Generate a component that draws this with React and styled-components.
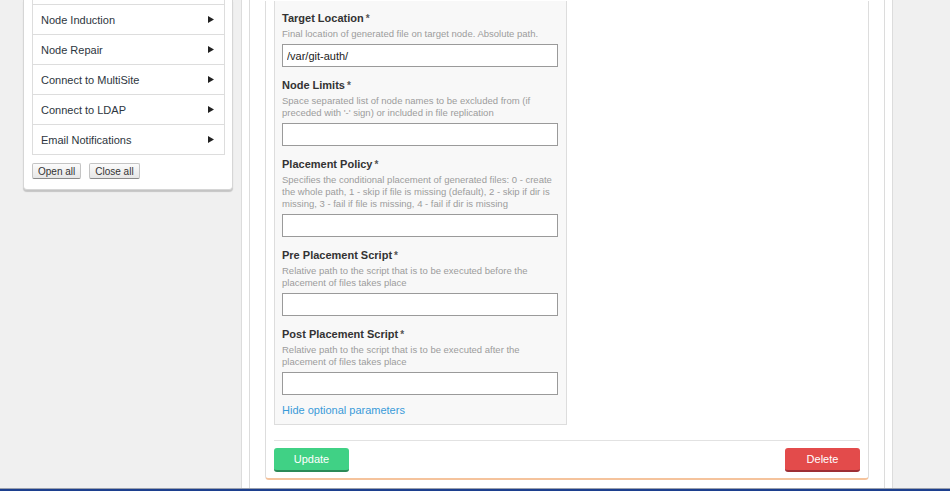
import React from "react";
import styled, { createGlobalStyle } from "styled-components";

const GlobalStyle = createGlobalStyle`
  html, body {
    margin: 0;
    padding: 0;
    height: 100%;
    overflow: hidden;
  }
  body {
    background: #f0f0f0;
    font-family: Arial, "Liberation Sans", sans-serif;
    color: #333;
  }
`;

const Page = styled.div`
  min-height: 100vh;
  display: flex;
  flex-direction: column;
`;

const Body = styled.div`
  flex: 1;
  display: flex;
  align-items: stretch;
`;

const Sidebar = styled.div`
  align-self: flex-start;
  width: 210px;
  margin-left: 23px;
  box-sizing: border-box;
  background: #ffffff;
  border: 1px solid #d6d6d6;
  border-top: none;
  border-radius: 0 0 4px 4px;
  box-shadow: 0 2px 1px rgba(0, 0, 0, 0.18);
  padding: 0 7px 10px 8px;
`;

const MenuList = styled.ul`
  list-style: none;
  margin: -25px 0 0;
  padding: 0;
  border: 1px solid #dddddd;
  border-top: none;
`;

const MenuItem = styled.li`
  height: 29px;
  border-bottom: 1px solid #dddddd;
  display: flex;
  align-items: center;
  justify-content: space-between;
  padding: 0 10px 0 8px;
  font-size: 11px;
  color: #2d3640;
  cursor: pointer;

  &:last-child {
    border-bottom: none;
  }
`;

const Arrow = styled.svg`
  width: 6px;
  height: 7px;
  fill: #222;
`;

const SideButtons = styled.div`
  display: flex;
  gap: 8px;
  margin-top: 8px;
`;

const SideButton = styled.button`
  height: 16px;
  padding: 0 5px;
  font-family: Arial, "Liberation Sans", sans-serif;
  font-size: 10px;
  color: #333;
  background: linear-gradient(#fbfbfb, #e6e6e6);
  border: 1px solid #c4c4c4;
  border-bottom-color: #8a8a8a;
  border-radius: 2px;
  line-height: 13px;
  cursor: pointer;
`;

const Outer = styled.div`
  margin-left: 8px;
  width: 652px;
  box-sizing: border-box;
  background: #ffffff;
  border-left: 1px solid #dcdcdc;
  border-right: 1px solid #dcdcdc;
  padding: 0 7px;
  display: flex;
`;

const Inner = styled.div`
  flex: 1;
  border-left: 1px solid #dcdcdc;
  border-right: 1px solid #dcdcdc;
  padding: 0 15px 8px;
  display: flex;
  flex-direction: column;
  justify-content: flex-end;
`;

const Panel = styled.div`
  background: #ffffff;
  border: 1px solid #dddddd;
  border-top: none;
  border-bottom: 2px solid #f5c39c;
  border-radius: 0 0 4px 4px;
  padding: 0 8px 6px;
`;

const FormBox = styled.div`
  width: 293px;
  box-sizing: border-box;
  background: #f8f8f8;
  border: 1px solid #dddddd;
  border-top: none;
  padding: 10px 8px 7px 7px;
`;

const Field = styled.div`
  margin-bottom: 11px;

  &:last-of-type {
    margin-bottom: 0;
  }
`;

const Label = styled.div`
  font-size: 11px;
  font-weight: bold;
  line-height: 14px;
  height: 14px;
  color: #333;
`;

const Req = styled.span`
  color: #555;
  font-size: 10px;
  line-height: 0;
  margin-left: 2px;
`;

const Help = styled.div`
  margin-top: 3px;
  font-size: 9.5px;
  line-height: 12px;
  color: #9c9c9c;
  white-space: pre-line;
`;

const Input = styled.input`
  display: block;
  margin-top: 4px;
  width: 276px;
  height: 23px;
  box-sizing: border-box;
  border: 1px solid #9a9a9a;
  background: #ffffff;
  padding: 0 4px;
  font-family: Arial, "Liberation Sans", sans-serif;
  font-size: 11px;
  color: #222;
  outline: none;
`;

const Toggle = styled.a`
  display: block;
  margin-top: 8px;
  font-size: 11px;
  line-height: 14px;
  color: #3a9bd8;
  text-decoration: none;
  cursor: pointer;
`;

const Divider = styled.hr`
  margin: 15px 0 7px;
  border: none;
  border-top: 1px solid #e2e2e2;
`;

const Actions = styled.div`
  display: flex;
  justify-content: space-between;
`;

const ActionButton = styled.button`
  width: 75px;
  height: 24px;
  border: none;
  border-radius: 3px;
  background: ${p => (p.$danger ? "#e34b4b" : "#40d185")};
  border-bottom: 2px solid ${p => (p.$danger ? "#9e2f35" : "#2b8a57")};
  color: #ffffff;
  font-family: Arial, "Liberation Sans", sans-serif;
  font-size: 11px;
  cursor: pointer;
`;

const Footer = styled.div`
  height: 2px;
  border-top: 1px solid #9aa0ad;
  background: #1c3f8e;
`;

// first entry is the row scrolled above the viewport
const menu = [
  "",
  "Node Induction",
  "Node Repair",
  "Connect to MultiSite",
  "Connect to LDAP",
  "Email Notifications",
];

const fields = [
  {
    label: "Target Location",
    help: "Final location of generated file on target node. Absolute path.",
    value: "/var/git-auth/",
  },
  {
    label: "Node Limits",
    help: "Space separated list of node names to be excluded from (if\npreceded with '-' sign) or included in file replication",
    value: "",
  },
  {
    label: "Placement Policy",
    help: "Specifies the conditional placement of generated files: 0 - create\nthe whole path, 1 - skip if file is missing (default), 2 - skip if dir is\nmissing, 3 - fail if file is missing, 4 - fail if dir is missing",
    value: "",
  },
  {
    label: "Pre Placement Script",
    help: "Relative path to the script that is to be executed before the\nplacement of files takes place",
    value: "",
  },
  {
    label: "Post Placement Script",
    help: "Relative path to the script that is to be executed after the\nplacement of files takes place",
    value: "",
  },
];

export default function App() {
  return (
    <Page>
      <GlobalStyle />
      <Body>
        <Sidebar>
          <MenuList>
            {menu.map((item, i) => (
              <MenuItem key={i}>
                {item}
                {item && (
                  <Arrow viewBox="0 0 6 7">
                    <polygon points="0,0 6,3.5 0,7" />
                  </Arrow>
                )}
              </MenuItem>
            ))}
          </MenuList>
          <SideButtons>
            <SideButton>Open all</SideButton>
            <SideButton>Close all</SideButton>
          </SideButtons>
        </Sidebar>
        <Outer>
          <Inner>
            <Panel>
              <FormBox>
                {fields.map(f => (
                  <Field key={f.label}>
                    <Label>
                      {f.label}
                      <Req>*</Req>
                    </Label>
                    <Help>{f.help}</Help>
                    <Input defaultValue={f.value} />
                  </Field>
                ))}
                <Toggle>Hide optional parameters</Toggle>
              </FormBox>
              <Divider />
              <Actions>
                <ActionButton>Update</ActionButton>
                <ActionButton $danger>Delete</ActionButton>
              </Actions>
            </Panel>
          </Inner>
        </Outer>
      </Body>
      <Footer />
    </Page>
  );
}
